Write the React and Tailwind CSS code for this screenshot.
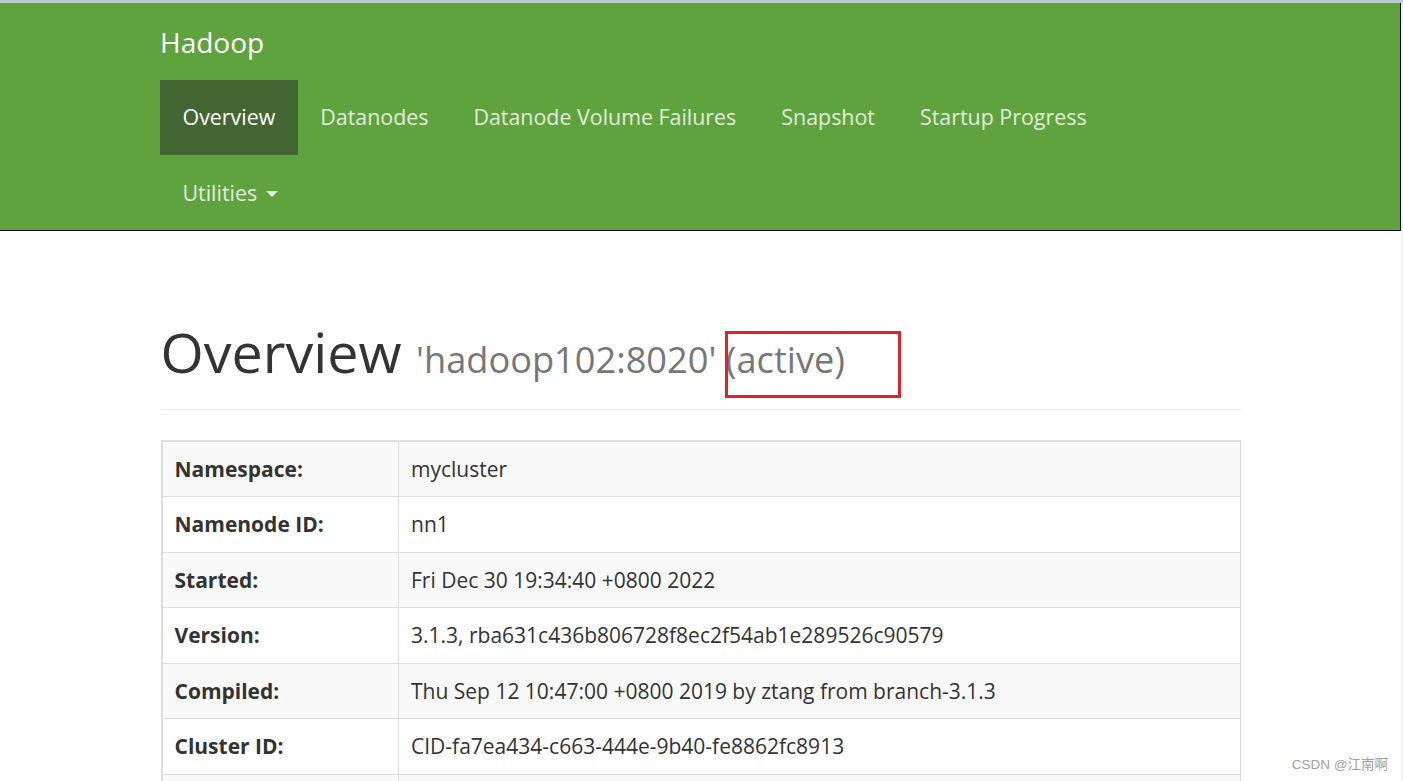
import React from 'react';

const navItems = ['Overview', 'Datanodes', 'Datanode Volume Failures', 'Snapshot', 'Startup Progress'];

const rows = [
  ['Namespace:', 'mycluster'],
  ['Namenode ID:', 'nn1'],
  ['Started:', 'Fri Dec 30 19:34:40 +0800 2022'],
  ['Version:', '3.1.3, rba631c436b806728f8ec2f54ab1e289526c90579'],
  ['Compiled:', 'Thu Sep 12 10:47:00 +0800 2019 by ztang from branch-3.1.3'],
  ['Cluster ID:', 'CID-fa7ea434-c663-444e-9b40-fe8862fc8913'],
  ['Block Pool ID:', 'BP-1027584915-192.168.10.102-1672386410270'],
];

const NavLink = ({ label, active }) => (
  <li>
    <a
      href="#"
      className={
        active
          ? 'block h-[75px] px-[22.5px] pt-[22px] leading-[30px] text-white bg-[#436632]'
          : 'block h-[75px] px-[22.5px] pt-[22px] leading-[30px] text-[#e2eddb]'
      }
    >
      {label}
    </a>
  </li>
);

export default function App() {
  return (
    <div className="relative h-[781px] overflow-hidden bg-white font-['Open_Sans',sans-serif] text-[#333]">
      {/* top strip of the browser */}
      <div className="h-[3px] bg-[#b9ccd2]" />

      <div className="flex">
        <div className="flex-1">
          {/* Navbar */}
          <nav className="bg-[#5fa33e] border-r border-b border-black">
            <div className="w-[1080px] mx-auto">
              <div className="h-[77px] pt-[24px] text-[28px] leading-[30px] text-white">Hadoop</div>
              <ul className="flex flex-wrap w-[1080px] text-[21.4px]">
                {navItems.map((item, i) => (
                  <NavLink key={item} label={item} active={i === 0} />
                ))}
              </ul>
              <ul className="flex text-[21.4px]">
                <li>
                  <a href="#" className="flex items-center h-[75px] px-[22.5px] leading-[30px] text-[#e2eddb]">
                    Utilities
                    <span className="ml-[9px] mt-[2px] w-0 h-0 border-l-[6px] border-r-[6px] border-t-[6px] border-l-transparent border-r-transparent border-t-[#e2eddb]" />
                  </a>
                </li>
              </ul>
            </div>
          </nav>

          {/* Content */}
          <div className="w-[1080px] mx-auto pt-[91px]">
            <h1 className="text-[55.6px] leading-[59.4px] font-normal text-[#333]">
              Overview{' '}
              <small className="text-[36.2px] text-[#777]">
                'hadoop102:8020'{' '}
                <span className="relative">
                  (active)
                  <span className="absolute left-[-1px] top-[-3px] w-[176px] h-[67px] border-[3px] border-[#e4202b]" />
                </span>
              </small>
            </h1>
            <hr className="mt-[20px] border-t border-[#eee]" />

            <table className="mt-[30px] w-full border-collapse text-[21px] leading-[30px] border-t-2 border-l-2 border-[#ddd]">
              <tbody>
                {rows.map(([k, v], i) => (
                  <tr key={k} className={i % 2 === 0 ? 'bg-[#f9f9f9]' : 'bg-white'}>
                    <th className={(i % 2 === 0 ? 'h-[55px] ' : 'h-[56px] ') + 'w-[237px] px-3 text-left font-bold border border-[#ddd]'}>
                      {k}
                    </th>
                    <td className="px-3 border border-[#ddd]">{v}</td>
                  </tr>
                ))}
              </tbody>
            </table>
          </div>
        </div>
        <div className="w-[2px] h-[781px] bg-[#f0f0f0]" />
      </div>

      {/* watermark */}
      <div className="absolute right-[15px] bottom-[6px] text-[13.5px] text-[#a0a0a0] font-['Liberation_Sans','Noto_Sans_CJK_SC',sans-serif]">
        CSDN @江南啊
      </div>
    </div>
  );
}
